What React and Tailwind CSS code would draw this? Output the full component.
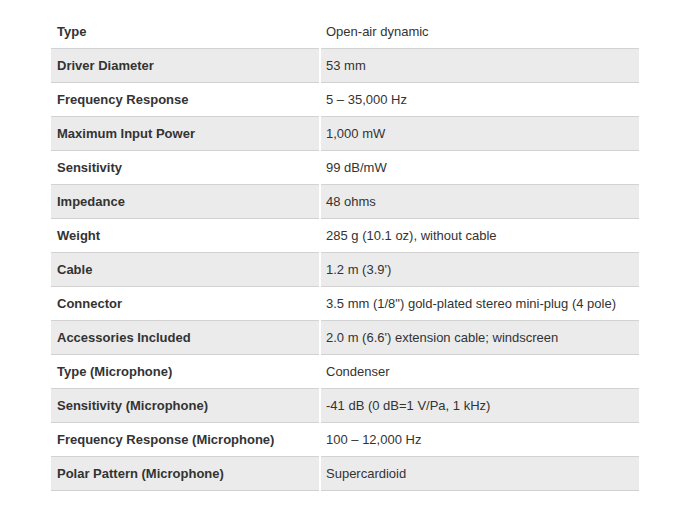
const rows = [
  ["Type", "Open-air dynamic"],
  ["Driver Diameter", "53 mm"],
  ["Frequency Response", "5 – 35,000 Hz"],
  ["Maximum Input Power", "1,000 mW"],
  ["Sensitivity", "99 dB/mW"],
  ["Impedance", "48 ohms"],
  ["Weight", "285 g (10.1 oz), without cable"],
  ["Cable", "1.2 m (3.9')"],
  ["Connector", "3.5 mm (1/8\") gold-plated stereo mini-plug (4 pole)"],
  ["Accessories Included", "2.0 m (6.6') extension cable; windscreen"],
  ["Type (Microphone)", "Condenser"],
  ["Sensitivity (Microphone)", "-41 dB (0 dB=1 V/Pa, 1 kHz)"],
  ["Frequency Response (Microphone)", "100 – 12,000 Hz"],
  ["Polar Pattern (Microphone)", "Supercardioid"],
];

export default function App() {
  return (
    <div className="w-[693px] h-[518px] bg-white pt-[15px] pl-[51px] font-['Liberation_Sans',Arial,sans-serif] text-[13px] text-[#333333]">
      <div className="w-[588px] flex flex-col">
        {rows.map(([k, v], i) => (
          <div key={i} className="flex gap-[2px] h-[34px]">
            <div
              className={`w-[268px] shrink-0 flex items-center pl-[6px] pt-[1px] border-b border-[#d2d2d2] font-bold ${
                i % 2 === 1 ? "bg-[#ebebeb]" : "bg-white"
              }`}
            >
              {k}
            </div>
            <div
              className={`flex-1 flex items-center pl-[5px] pt-[1px] border-b border-[#d2d2d2] ${
                i % 2 === 1 ? "bg-[#ebebeb]" : "bg-white"
              }`}
            >
              {v}
            </div>
          </div>
        ))}
      </div>
    </div>
  );
}
